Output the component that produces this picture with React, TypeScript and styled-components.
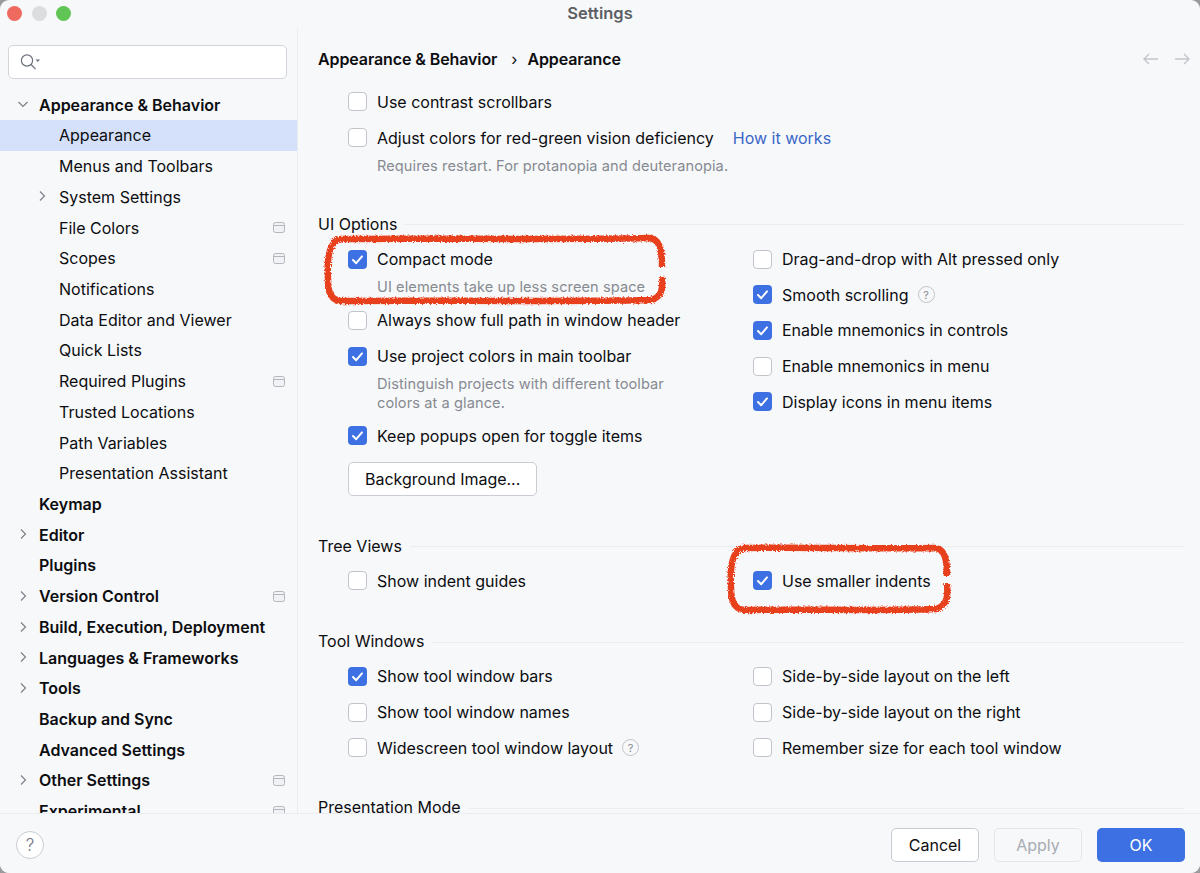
import styled, { createGlobalStyle } from 'styled-components';

const GlobalStyle = createGlobalStyle`
  html, body { margin: 0; padding: 0; background: #9a9a9c; }
  * { box-sizing: border-box; }
  #root { width: 1200px; height: 873px; }
`;

const Window = styled.div`
  display: flex;
  flex-direction: column;
  width: 1200px;
  height: 873px;
  overflow: hidden;
  border-radius: 9px;
  background: #f7f8fa;
  color: #0c0d10;
  font-family: Inter, "Liberation Sans", sans-serif;
  font-size: 16px;
`;

const TitleBar = styled.div`
  position: relative;
  flex: 0 0 28px;
  display: flex;
  align-items: center;
  justify-content: center;
`;

const Lights = styled.div`
  position: absolute;
  left: 7px;
  top: 6px;
  display: flex;
  gap: 9.7px;
`;

const Light = styled.span<{ $color: string }>`
  width: 15px;
  height: 15px;
  border-radius: 50%;
  background: ${p => p.$color};
`;

const Title = styled.div`
  font-size: 16.5px;
  font-weight: 600;
  color: #5c5e63;
  margin-top: -2px;
`;

const Split = styled.div`
  flex: 1;
  min-height: 0;
  display: flex;
`;

const Sidebar = styled.div`
  flex: 0 0 298px;
  overflow: hidden;
  border-right: 1px solid #ebecf0;
  padding-top: 17px;
`;

const SearchBox = styled.div`
  display: flex;
  align-items: center;
  height: 34px;
  margin: 0 10px 0 8px;
  padding-left: 11px;
  background: #fff;
  border: 1.5px solid #d3d5db;
  border-radius: 5px;
`;

const Tree = styled.div`
  margin-top: 10.3px;
`;

const TreeRow = styled.div<{ $selected?: boolean; $bold?: boolean }>`
  position: relative;
  display: flex;
  align-items: center;
  height: 30.72px;
  padding-left: ${p => (p.$bold ? 39 : 59)}px;
  padding-right: 12px;
  font-weight: ${p => (p.$bold ? 600 : 400)};
  background: ${p => (p.$selected ? '#d5e1fa' : 'transparent')};
  white-space: nowrap;
`;

const ChevronSlot = styled.svg<{ $bold?: boolean }>`
  position: absolute;
  left: ${p => (p.$bold ? 17 : 36)}px;
  top: 9px;
  width: 12px;
  height: 12px;
  fill: none;
  stroke: #7d8087;
  stroke-width: 1.2;
`;

const ProjectIcon = styled.span`
  margin-left: auto;
  width: 12px;
  height: 11px;
  border: 1px solid #b4b6bd;
  border-radius: 2.5px;
  background: linear-gradient(#b4b6bd, #b4b6bd) 0 2px / 100% 1px no-repeat, #f1f2f5;
`;

const Main = styled.div`
  flex: 1;
  min-width: 0;
  overflow: hidden;
  padding: 13px 16px 0 20px;
`;

const Breadcrumb = styled.div`
  display: flex;
  align-items: center;
  height: 36px;
  font-weight: 600;
  letter-spacing: -0.1px;
`;

const CrumbSep = styled.span`
  margin: 0 10px 0 14px;
  font-weight: 400;
`;

const NavArrows = styled.div`
  display: flex;
  gap: 17px;
  margin-left: auto;
  margin-right: -6px;
`;

const NavIcon = styled.svg`
  width: 15px;
  height: 12px;
  fill: none;
  stroke: #c3c5ca;
  stroke-width: 1.4;
`;

const Pane = styled.div`
  padding-left: 30px;
  padding-top: 7px;
`;

const Section = styled.div<{ $gap: number }>`
  margin-top: ${p => p.$gap}px;
`;

const SectionTitle = styled.div`
  display: flex;
  align-items: center;
  gap: 8px;
  height: 20px;
  margin-bottom: 7.3px;
  white-space: nowrap;

  &::after {
    content: '';
    flex: 1;
    height: 1px;
    margin-top: 2px;
    background: #ebecf0;
  }
`;

const Columns = styled.div`
  display: grid;
  grid-template-columns: 405px 1fr;
  padding-left: 30px;
`;

const Cell = styled.div`
  position: relative;
`;

const Option = styled.div`
  display: flex;
  align-items: center;
  gap: 10px;
  height: 35.7px;
  white-space: nowrap;
`;

const Box = styled.span<{ $checked?: boolean }>`
  flex: 0 0 19px;
  height: 19px;
  display: flex;
  align-items: center;
  justify-content: center;
  border-radius: 4px;
  background: ${p => (p.$checked ? '#3d70e2' : '#fff')};
  border: ${p => (p.$checked ? 'none' : '1px solid #c2c4ca')};
`;

const CheckMark = styled.svg`
  width: 13px;
  height: 13px;
  fill: none;
  stroke: #fff;
  stroke-width: 2;
  stroke-linecap: round;
  stroke-linejoin: round;
`;

const Hint = styled.div`
  margin: 1.5px 0 5.7px 29px;
  font-size: 14.6px;
  line-height: 18.5px;
  letter-spacing: 0.08px;
  color: #868a91;
`;

const Link = styled.a`
  margin-left: 9px;
  color: #3a66c8;
`;

const HelpDot = styled.span`
  display: flex;
  align-items: center;
  justify-content: center;
  width: 17px;
  height: 17px;
  margin-left: -1px;
  border: 1px solid #c2c4ca;
  border-radius: 50%;
  font-size: 11px;
  color: #868a91;
`;

const PlainButton = styled.button`
  height: 34px;
  margin: 8px 0 0;
  padding: 0 16px;
  background: #fff;
  border: 1.5px solid #c9ccd2;
  border-radius: 5px;
  color: inherit;
  font: inherit;
  letter-spacing: -0.02px;
`;

const Scribble = styled.svg<{ $left: number; $top: number }>`
  position: absolute;
  left: ${p => p.$left}px;
  top: ${p => p.$top}px;
  overflow: visible;
  pointer-events: none;
  fill: none;
  stroke: #e8401f;
  stroke-width: 6.5;
  stroke-linecap: butt;
`;

const Footer = styled.div`
  flex: 0 0 60px;
  display: flex;
  align-items: center;
  gap: 15px;
  padding: 3px 15px 0 16px;
  border-top: 1px solid #ebecf0;
  background: #f7f8fa;
`;

const HelpButton = styled.div`
  display: flex;
  align-items: center;
  justify-content: center;
  width: 28px;
  height: 28px;
  margin-right: auto;
  background: #fff;
  border: 1px solid #c9ccd2;
  border-radius: 50%;
  font-size: 17px;
  font-weight: 300;
  color: #6c707e;
`;

const FooterButton = styled.button<{ $kind: 'plain' | 'off' | 'primary' }>`
  width: 88px;
  height: 34px;
  border-radius: 5px;
  font: inherit;
  letter-spacing: inherit;
  color: ${p => (p.$kind === 'primary' ? '#fff' : p.$kind === 'off' ? '#a8abb3' : 'inherit')};
  background: ${p => (p.$kind === 'primary' ? '#3d70e2' : p.$kind === 'off' ? '#f7f8fa' : '#fff')};
  border: ${p =>
    p.$kind === 'primary' ? 'none' : p.$kind === 'off' ? '1.5px solid #e3e5e9' : '1.5px solid #c9ccd2'};
`;

type TreeItem = { label: string; bold?: boolean; arrow?: 'open' | 'closed'; project?: boolean; selected?: boolean };

const treeItems: TreeItem[] = [
  { label: 'Appearance & Behavior', bold: true, arrow: 'open' },
  { label: 'Appearance', selected: true },
  { label: 'Menus and Toolbars' },
  { label: 'System Settings', arrow: 'closed' },
  { label: 'File Colors', project: true },
  { label: 'Scopes', project: true },
  { label: 'Notifications' },
  { label: 'Data Editor and Viewer' },
  { label: 'Quick Lists' },
  { label: 'Required Plugins', project: true },
  { label: 'Trusted Locations' },
  { label: 'Path Variables' },
  { label: 'Presentation Assistant' },
  { label: 'Keymap', bold: true },
  { label: 'Editor', bold: true, arrow: 'closed' },
  { label: 'Plugins', bold: true },
  { label: 'Version Control', bold: true, arrow: 'closed', project: true },
  { label: 'Build, Execution, Deployment', bold: true, arrow: 'closed' },
  { label: 'Languages & Frameworks', bold: true, arrow: 'closed' },
  { label: 'Tools', bold: true, arrow: 'closed' },
  { label: 'Backup and Sync', bold: true },
  { label: 'Advanced Settings', bold: true },
  { label: 'Other Settings', bold: true, arrow: 'closed', project: true },
  { label: 'Experimental', bold: true, project: true },
];

const Check = ({ label, checked, children }: { label: string; checked?: boolean; children?: React.ReactNode }) => (
  <Option>
    <Box $checked={checked}>
      {checked && (
        <CheckMark viewBox="0 0 13 13">
          <path d="M2 7l3.2 3.2L11 3.4" />
        </CheckMark>
      )}
    </Box>
    {label}
    {children}
  </Option>
);

const App = () => (
  <Window>
    <GlobalStyle />
    <TitleBar>
      <Lights>
        <Light $color="#ee6a5f" />
        <Light $color="#dcdddf" />
        <Light $color="#60c554" />
      </Lights>
      <Title>Settings</Title>
    </TitleBar>
    <Split>
      <Sidebar>
        <SearchBox>
          <svg width="22" height="18" viewBox="0 0 22 18" fill="none" stroke="#6c707e" strokeWidth="1.2">
            <circle cx="7" cy="7.5" r="5.6" />
            <path d="M11 11.5l4.6 4.6" />
            <path d="M15.5 6.5h4.5l-2.25 2.6z" fill="#6c707e" stroke="none" />
          </svg>
        </SearchBox>
        <Tree>
          {treeItems.map(item => (
            <TreeRow key={item.label} $bold={item.bold} $selected={item.selected}>
              {item.arrow && (
                <ChevronSlot $bold={item.bold} viewBox="0 0 12 12">
                  <path d={item.arrow === 'open' ? 'M1.5 4l4.5 4.5L10.500 4' : 'M4 1.500L8.500 6 4 10.500'} />
                </ChevronSlot>
              )}
              {item.label}
              {item.project && <ProjectIcon />}
            </TreeRow>
          ))}
        </Tree>
      </Sidebar>
      <Main>
        <Breadcrumb>
          Appearance &amp; Behavior
          <CrumbSep>›</CrumbSep>
          Appearance
          <NavArrows>
            <NavIcon viewBox="0 0 15 12">
              <path d="M15 6H1M6 1L1 6l5 5" />
            </NavIcon>
            <NavIcon viewBox="0 0 15 12">
              <path d="M0 6h14M9 1l5 5-5 5" />
            </NavIcon>
          </NavArrows>
        </Breadcrumb>
        <Pane>
          <Check label="Use contrast scrollbars" />
          <Check label="Adjust colors for red-green vision deficiency">
            <Link>How it works</Link>
          </Check>
          <Hint>Requires restart. For protanopia and deuteranopia.</Hint>
        </Pane>

        <Section $gap={38.5}>
          <SectionTitle>UI Options</SectionTitle>
          <Columns>
            <Cell>
              <Scribble $left={-23} $top={-6} width="340" height="70" viewBox="0 0 340 70">
                <defs>
                  <filter id="rough" x="-5%" y="-20%" width="110%" height="140%">
                    <feTurbulence type="fractalNoise" baseFrequency="0.6" numOctaves="2" seed="4" />
                    <feDisplacementMap in="SourceGraphic" scale="4" />
                  </filter>
                </defs>
                <path
                  filter="url(#rough)"
                  d="M337 42 C338 54 337 62 326 65 C240 67 90 65 16 66 C6 65 3 58 3 44 C2 28 3 6 16 4 C90 3 240 5 324 3 C334 4 337 12 337 32"
                />
              </Scribble>
              <Check label="Compact mode" checked />
              <Hint>UI elements take up less screen space</Hint>
              <Check label="Always show full path in window header" />
              <Check label="Use project colors in main toolbar" checked />
              <Hint>
                Distinguish projects with different toolbar
                <br />
                colors at a glance.
              </Hint>
              <Check label="Keep popups open for toggle items" checked />
              <PlainButton>Background Image...</PlainButton>
            </Cell>
            <Cell>
              <Check label="Drag-and-drop with Alt pressed only" />
              <Check label="Smooth scrolling" checked>
                <HelpDot>?</HelpDot>
              </Check>
              <Check label="Enable mnemonics in controls" checked />
              <Check label="Enable mnemonics in menu" />
              <Check label="Display icons in menu items" checked />
            </Cell>
          </Columns>
        </Section>

        <Section $gap={40}>
          <SectionTitle>Tree Views</SectionTitle>
          <Columns>
            <Cell>
              <Check label="Show indent guides" />
            </Cell>
            <Cell>
              <Scribble $left={-25} $top={-18} width="222" height="68" viewBox="0 0 222 68">
                <path
                  filter="url(#rough)"
                  d="M219 39 C220 50 220 60 208 64 C150 66 70 64 16 65 C6 64 3 56 3 42 C2 26 3 6 15 3 C70 2 150 4 207 3 C216 4 219 12 219 31"
                />
              </Scribble>
              <Check label="Use smaller indents" checked />
            </Cell>
          </Columns>
        </Section>

        <Section $gap={32.5}>
          <SectionTitle>Tool Windows</SectionTitle>
          <Columns>
            <Cell>
              <Check label="Show tool window bars" checked />
              <Check label="Show tool window names" />
              <Check label="Widescreen tool window layout">
                <HelpDot>?</HelpDot>
              </Check>
            </Cell>
            <Cell>
              <Check label="Side-by-side layout on the left" />
              <Check label="Side-by-side layout on the right" />
              <Check label="Remember size for each tool window" />
            </Cell>
          </Columns>
        </Section>

        <Section $gap={31.7}>
          <SectionTitle>Presentation Mode</SectionTitle>
        </Section>
      </Main>
    </Split>
    <Footer>
      <HelpButton>?</HelpButton>
      <FooterButton $kind="plain">Cancel</FooterButton>
      <FooterButton $kind="off">Apply</FooterButton>
      <FooterButton $kind="primary">OK</FooterButton>
    </Footer>
  </Window>
);

export default App;
